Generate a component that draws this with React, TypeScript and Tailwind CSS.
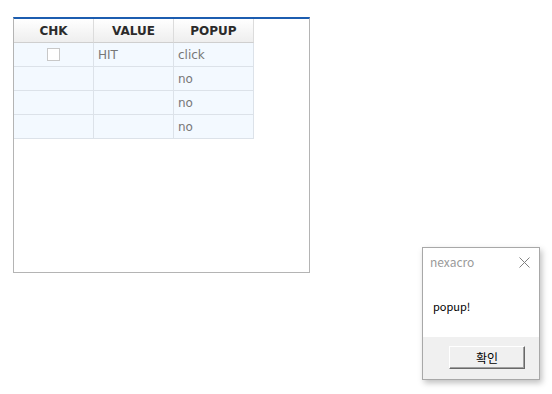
const rows = [
  { chk: true, value: 'HIT', popup: 'click' },
  { chk: false, value: '', popup: 'no' },
  { chk: false, value: '', popup: 'no' },
  { chk: false, value: '', popup: 'no' },
];

function HeadCell({ label }: { label: string }) {
  return (
    <div className="w-[80px] h-[24px] flex items-center justify-center border-r border-b border-r-[#dcdcdc] border-b-[#cfcfcf] bg-gradient-to-b from-[#ffffff] to-[#eeeeee] text-[12px] font-bold text-[#2b2b2b]">
      {label}
    </div>
  );
}

function Cell({ children, center }: { children?: React.ReactNode; center?: boolean }) {
  return (
    <div
      className={
        'w-[80px] h-[24px] flex items-center border-r border-b border-[#dce2e9] bg-[#f3f9ff] text-[12px] text-[#777777] ' +
        (center ? 'justify-center' : 'pl-[4px]')
      }
    >
      {children}
    </div>
  );
}

export default function App() {
  return (
    <div className="relative w-[552px] h-[394px] bg-white overflow-hidden font-['DejaVu_Sans',sans-serif]">
      <div className="ml-[13px] mt-[17px] w-[297px] h-[256px] border border-[#b4b4b4] border-t-2 border-t-[#1c5db0]">
        <div className="flex">
          <HeadCell label="CHK" />
          <HeadCell label="VALUE" />
          <HeadCell label="POPUP" />
        </div>
        {rows.map((r, i) => (
          <div key={i} className="flex">
            <Cell center>
              {r.chk && <span className="block w-[13px] h-[13px] border border-[#c8c8c8] bg-white" />}
            </Cell>
            <Cell>{r.value}</Cell>
            <Cell>{r.popup}</Cell>
          </div>
        ))}
      </div>

      {/* popup window */}
      <div className="absolute left-[422px] top-[247px] w-[118px] h-[133px] flex flex-col bg-white border border-[#a8a8a8] shadow-[2px_3px_6px_rgba(0,0,0,0.25)] font-['Noto_Sans_CJK_KR',sans-serif]">
        <div className="h-[28px] flex items-center justify-between pl-[7px] pr-[9px]">
          <span className="text-[12px] text-[#9a9a9a] leading-none">nexacro</span>
          <svg width="11" height="11" viewBox="0 0 11 11" className="text-[#808080]">
            <path d="M0.5 0.5 L10.5 10.5 M10.5 0.5 L0.5 10.5" stroke="currentColor" strokeWidth="1" fill="none" />
          </svg>
        </div>
        <div className="h-[61px] flex items-center pl-[10px] text-[11px] text-black leading-none">popup!</div>
        <div className="flex-1 bg-[#f0f0f0] pl-[26px] pt-[9px]">
          <button className="w-[76px] h-[23px] bg-[#f0f0f0] border border-t-white border-l-white border-r-[#696969] border-b-[#696969] shadow-[inset_-1px_-1px_0_#a0a0a0] text-[12px] text-black leading-none flex items-center justify-center">
            확인
          </button>
        </div>
      </div>
    </div>
  );
}
